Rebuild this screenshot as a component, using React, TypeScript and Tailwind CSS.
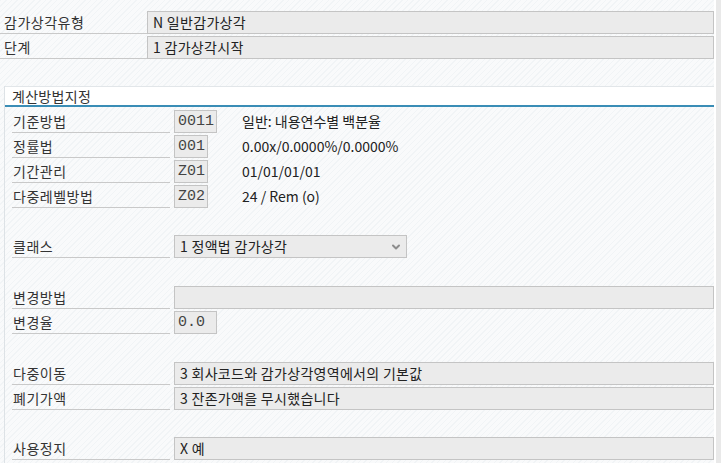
import { ChevronDown } from "lucide-react";

const font = "font-['Noto_Sans_CJK_KR','Noto_Sans',sans-serif]";
const mono = "font-['Liberation_Mono','DejaVu_Sans_Mono',monospace]";

function TopRow({ label, value }: { label: string; value: string }) {
  return (
    <div className="flex h-[23px]">
      <div className="w-[147px] shrink-0 border-b border-[#c9c9c9] pl-[4px] text-[14px] tracking-[0.5px] leading-[22px] text-[#333]">
        {label}
      </div>
      <div className="flex-1 border border-[#c4c4c4] bg-[#ebebeb] pl-[5px] text-[14px] tracking-[0.3px] leading-[21px] text-[#222]">
        {value}
      </div>
    </div>
  );
}

function Label({ text }: { text: string }) {
  return (
    <div className="w-[158px] shrink-0 border-b border-[#c9c9c9] pl-[1px] text-[14px] tracking-[0.5px] leading-[22px] text-[#333]">
      {text}
    </div>
  );
}

function CodeRow({ label, code, desc, width }: { label: string; code: string; desc: string; width: string }) {
  return (
    <div className="flex h-[23px] items-stretch gap-[4px]">
      <Label text={label} />
      <div className={`${width} shrink-0 border border-[#c4c4c4] bg-[#ebebeb] pl-[3px] ${mono} text-[15px] leading-[21px] text-[#444]`}>
        {code}
      </div>
      <div className="ml-auto w-[472px] text-[14px] leading-[22px] text-[#222]">{desc}</div>
    </div>
  );
}

function WideRow({ label, value }: { label: string; value: string }) {
  return (
    <div className="flex h-[23px] gap-[4px]">
      <Label text={label} />
      <div className="flex-1 border border-[#c4c4c4] bg-[#ebebeb] pl-[5px] text-[14px] tracking-[0.3px] leading-[21px] text-[#222]">
        {value}
      </div>
    </div>
  );
}

export default function App() {
  return (
    <div
      className={`flex h-[463px] w-[721px] overflow-hidden bg-[repeating-linear-gradient(135deg,#f1f4f6_0px,#f1f4f6_1px,#f9fafb_1px,#f9fafb_4px)] ${font}`}
    >
      <div className="flex w-[714px] flex-col pt-[11px]">
        <div className="flex flex-col gap-[2px]">
          <TopRow label="감가상각유형" value="N 일반감가상각" />
          <TopRow label="단계" value="1 감가상각시작" />
        </div>

        <div className="ml-[4px] mt-[27px] flex flex-1 flex-col border-l border-[#dde2e6]">
          <div className="h-[19px] border-t border-[#e2e6e9] bg-white pl-[7px] text-[14px] tracking-[0.3px] leading-[18px] text-[#333]">
            계산방법지정
          </div>
          <div className="h-[2px] bg-[#3a8db6]" />

          <div className="flex flex-col pl-[7px] pt-[3px]">
            <div className="flex flex-col gap-[2px]">
              <CodeRow label="기준방법" code="0011" desc="일반: 내용연수별 백분율" width="w-[43px]" />
              <CodeRow label="정률법" code="001" desc="0.00x/0.0000%/0.0000%" width="w-[34px]" />
              <CodeRow label="기간관리" code="Z01" desc="01/01/01/01" width="w-[34px]" />
              <CodeRow label="다중레벨방법" code="Z02" desc="24 / Rem (o)" width="w-[34px]" />
            </div>

            <div className="mt-[27px] flex h-[23px] gap-[4px]">
              <Label text="클래스" />
              <div className="flex w-[233px] items-center justify-between border border-[#c4c4c4] bg-[#ebebeb] pl-[5px] pr-[4px] text-[14px] tracking-[0.3px] leading-[21px] text-[#222]">
                <span>1 정액법 감가상각</span>
                <ChevronDown size={12} strokeWidth={4} className="text-[#8c8c8c]" />
              </div>
            </div>

            <div className="mt-[28px] flex flex-col gap-[2px]">
              <WideRow label="변경방법" value="" />
              <div className="flex h-[23px] gap-[4px]">
                <Label text="변경율" />
                <div className={`w-[43px] border border-[#c4c4c4] bg-[#ebebeb] pl-[3px] ${mono} text-[15px] leading-[21px] text-[#444]`}>
                  0.0
                </div>
              </div>
            </div>

            <div className="mt-[28px] flex flex-col gap-[2px]">
              <WideRow label="다중이동" value="3 회사코드와 감가상각영역에서의 기본값" />
              <WideRow label="폐기가액" value="3 잔존가액을 무시했습니다" />
            </div>

            <div className="mt-[27px] flex flex-col">
              <WideRow label="사용정지" value="X 예" />
            </div>
          </div>
        </div>
      </div>
      <div className="w-[7px] border-l-[2px] border-white bg-[#e9e9e9]" />
    </div>
  );
}
